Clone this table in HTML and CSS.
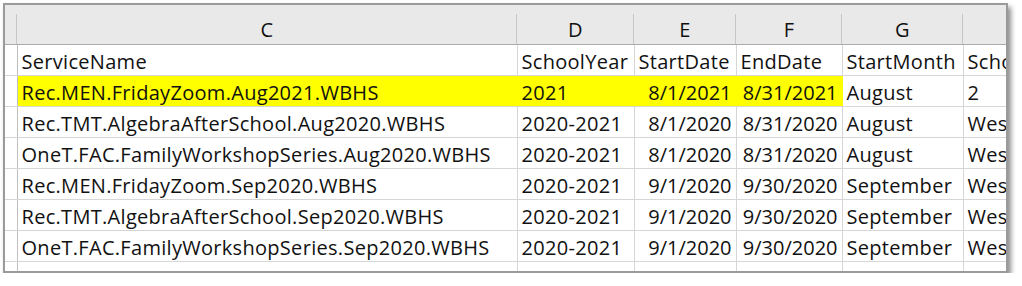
FILE: index.html
```html
<!DOCTYPE html>
<html lang="en">
  <head>
    <meta charset="UTF-8" />
    <meta name="viewport" content="width=device-width, initial-scale=1.0" />
    <title>Services</title>
    <link rel="stylesheet" href="styles.css">
  </head>

  <body>
    <div class="sheet">
      <table class="grid">
        <colgroup>
          <col class="c-row" />
          <col class="c-name" />
          <col class="c-year" />
          <col class="c-start" />
          <col class="c-end" />
          <col class="c-month" />
          <col class="c-school" />
        </colgroup>

        <!-- column letters -->
        <thead>
          <tr>
            <th></th>
            <th>C</th>
            <th>D</th>
            <th>E</th>
            <th>F</th>
            <th>G</th>
            <th></th>
          </tr>
        </thead>

        <tbody>
          <tr>
            <td class="rn"></td>
            <td>ServiceName</td>
            <td>SchoolYear</td>
            <td>StartDate</td>
            <td>EndDate</td>
            <td>StartMonth</td>
            <td>School</td>
          </tr>
          <tr class="marked">
            <td class="rn"></td>
            <td class="hl">Rec.MEN.FridayZoom.Aug2021.WBHS</td>
            <td class="hl">2021</td>
            <td class="hl num">8/1/2021</td>
            <td class="hl num">8/31/2021</td>
            <td>August</td>
            <td>2</td>
          </tr>
          <tr>
            <td class="rn"></td>
            <td>Rec.TMT.AlgebraAfterSchool.Aug2020.WBHS</td>
            <td>2020-2021</td>
            <td class="num">8/1/2020</td>
            <td class="num">8/31/2020</td>
            <td>August</td>
            <td>West</td>
          </tr>
          <tr>
            <td class="rn"></td>
            <td>OneT.FAC.FamilyWorkshopSeries.Aug2020.WBHS</td>
            <td>2020-2021</td>
            <td class="num">8/1/2020</td>
            <td class="num">8/31/2020</td>
            <td>August</td>
            <td>West</td>
          </tr>
          <tr>
            <td class="rn"></td>
            <td>Rec.MEN.FridayZoom.Sep2020.WBHS</td>
            <td>2020-2021</td>
            <td class="num">9/1/2020</td>
            <td class="num">9/30/2020</td>
            <td>September</td>
            <td>West</td>
          </tr>
          <tr>
            <td class="rn"></td>
            <td>Rec.TMT.AlgebraAfterSchool.Sep2020.WBHS</td>
            <td>2020-2021</td>
            <td class="num">9/1/2020</td>
            <td class="num">9/30/2020</td>
            <td>September</td>
            <td>West</td>
          </tr>
          <tr>
            <td class="rn"></td>
            <td>OneT.FAC.FamilyWorkshopSeries.Sep2020.WBHS</td>
            <td>2020-2021</td>
            <td class="num">9/1/2020</td>
            <td class="num">9/30/2020</td>
            <td>September</td>
            <td>West</td>
          </tr>
          <tr class="cut">
            <td class="rn"></td>
            <td></td>
            <td></td>
            <td></td>
            <td></td>
            <td></td>
            <td></td>
          </tr>
        </tbody>
      </table>
    </div>
  </body>
</html>
```

FILE: styles.css
```css
body {
  margin: 0;
  background-color: white;
  font-family: "Open Sans", Lato, sans-serif;
}

.sheet {
  margin: 3px 0 0 3px;
  width: 1001px;
  height: 266px;
  border: 2px solid #9a9a9a;
  box-shadow: 3px 4px 5px rgba(0, 0, 0, 0.45);
  overflow: hidden;
  background-color: white;
}

.grid {
  border-collapse: collapse;
  table-layout: fixed;
  width: 1105px;
  font-size: 20px;
  letter-spacing: 0.3px;
  color: #111;
}

.c-row { width: 12px; }
.c-name { width: 500px; }
.c-year { width: 117px; }
.c-start { width: 102px; }
.c-end { width: 106px; }
.c-month { width: 121px; }
.c-school { width: 147px; }

/* header strip with column letters */
.grid th {
  height: 39px;
  padding: 0;
  background-color: #e9e9e9;
  border-bottom: 1px solid #ababab;
  font-weight: normal;
  text-align: center;
  vertical-align: bottom;
  line-height: 29px;
  background-image: linear-gradient(#c6c6c6, #c6c6c6);
  background-size: 1px 30px;
  background-position: right bottom;
  background-repeat: no-repeat;
}

.grid td {
  height: 30px;
  padding: 0 4px;
  border-right: 1px solid #d6d6d6;
  border-bottom: 1px solid #d6d6d6;
  white-space: nowrap;
  overflow: hidden;
  vertical-align: bottom;
  line-height: 26px;
}

.grid td.rn {
  padding: 0;
  border-right: 1px solid #c0c0c0;
}

.grid td.num {
  text-align: right;
  letter-spacing: 0;
}

.grid td.hl {
  background-color: #ffff00;
}

.grid tr.marked td.hl {
  border-right-color: #ffff00;
}

.grid tr.cut td {
  height: 10px;
  border-bottom: none;
}
```
